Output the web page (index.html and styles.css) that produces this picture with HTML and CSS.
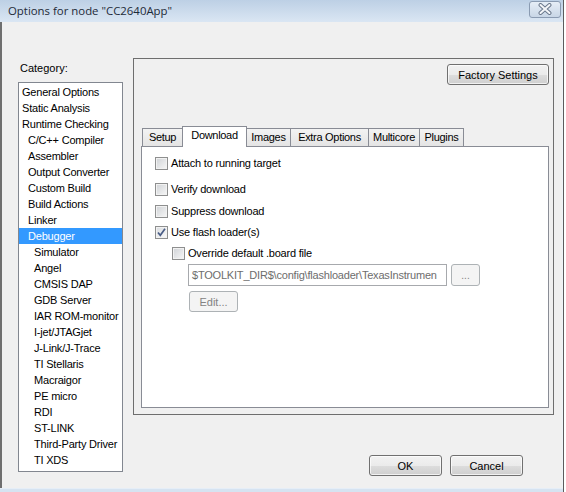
FILE: index.html
```html
<!DOCTYPE html>
<html>
<head>
<meta charset="utf-8">
<title>Options for node "CC2640App"</title>
<link rel="stylesheet" href="styles.css">
</head>
<body>
<div class="win">
  <div class="titlebar">
    <span class="title">Options for node "CC2640App"</span>
    <div class="close">
      <svg width="16" height="12" viewBox="0 0 16 12">
        <path d="M3.5 2 L12.5 10 M12.5 2 L3.5 10" stroke="#6a788c" stroke-width="4" stroke-linecap="round" fill="none"/>
        <path d="M3.5 2 L12.5 10 M12.5 2 L3.5 10" stroke="#f4f6f9" stroke-width="2" stroke-linecap="round" fill="none"/>
      </svg>
    </div>
  </div>
  <div class="client">
    <div class="main">
      <div class="left">
        <div class="cat-label">Category:</div>
        <ul class="list">
          <li class="l0">General Options</li>
          <li class="l0">Static Analysis</li>
          <li class="l0">Runtime Checking</li>
          <li class="l1">C/C++ Compiler</li>
          <li class="l1">Assembler</li>
          <li class="l1">Output Converter</li>
          <li class="l1">Custom Build</li>
          <li class="l1">Build Actions</li>
          <li class="l1">Linker</li>
          <li class="l1 sel">Debugger</li>
          <li class="l2">Simulator</li>
          <li class="l2">Angel</li>
          <li class="l2">CMSIS DAP</li>
          <li class="l2">GDB Server</li>
          <li class="l2">IAR ROM-monitor</li>
          <li class="l2">I-jet/JTAGjet</li>
          <li class="l2">J-Link/J-Trace</li>
          <li class="l2">TI Stellaris</li>
          <li class="l2">Macraigor</li>
          <li class="l2">PE micro</li>
          <li class="l2">RDI</li>
          <li class="l2">ST-LINK</li>
          <li class="l2">Third-Party Driver</li>
          <li class="l2">TI XDS</li>
        </ul>
      </div>
      <div class="right">
        <div class="panel">
          <div class="panel-top">
            <button class="btn factory">Factory Settings</button>
          </div>
          <div class="tabs">
            <div class="tab t-setup">Setup</div>
            <div class="tab t-download active">Download</div>
            <div class="tab t-images">Images</div>
            <div class="tab t-extra">Extra Options</div>
            <div class="tab t-multi">Multicore</div>
            <div class="tab t-plugins">Plugins</div>
          </div>
          <div class="page">
            <div class="cb-row r-attach"><span class="cb"></span><span class="cb-text">Attach to running target</span></div>
            <div class="cb-row r-verify"><span class="cb"></span><span class="cb-text">Verify download</span></div>
            <div class="cb-row r-suppress"><span class="cb"></span><span class="cb-text">Suppress download</span></div>
            <div class="cb-row r-flash"><span class="cb checked"><svg width="11" height="11" viewBox="0 0 11 11"><path d="M2 5.5 L4.3 8.3 L9 1.8" stroke="#4a5d86" stroke-width="1.7" fill="none"/></svg></span><span class="cb-text">Use flash loader(s)</span></div>
            <div class="cb-row r-override"><span class="cb"></span><span class="cb-text">Override default .board file</span></div>
            <div class="field-row">
              <div class="field">$TOOLKIT_DIR$\config\flashloader\TexasInstrumen</div>
              <button class="btn disabled browse">...</button>
            </div>
            <button class="btn disabled edit">Edit...</button>
          </div>
        </div>
        <div class="footer">
          <button class="btn ok">OK</button>
          <button class="btn cancel">Cancel</button>
        </div>
      </div>
    </div>
  </div>
  <div class="bottom-frame"></div>
</div>
</body>
</html>
```

FILE: styles.css
```css
html, body {
  margin: 0;
  padding: 0;
  background: #ffffff;
}

body {
  width: 566px;
  height: 492px;
  overflow: hidden;
  font-family: "Liberation Sans", Arial, sans-serif;
  font-size: 11px;
  color: #000;
}

.win {
  width: 563px;
  height: 492px;
  border-right: 1px solid #5c5c5c;
  background: #d3e1ef;
  display: flex;
  flex-direction: column;
}

.titlebar {
  height: 22px;
  flex: none;
  display: flex;
  align-items: center;
  justify-content: space-between;
  background: linear-gradient(#bdd0e5, #dae6f3);
}

.title {
  margin-left: 8px;
  font-family: "Open Sans", "Liberation Sans", sans-serif;
  font-size: 11.4px;
  color: #1e2a38;
  position: relative;
  top: -1px;
}

.close {
  width: 30px;
  height: 15px;
  margin-right: 2px;
  margin-top: -4px;
  border: 1px solid #8a9bb2;
  border-radius: 3px;
  background: linear-gradient(#e6eef7, #c8d6e6);
  display: flex;
  align-items: center;
  justify-content: center;
}

.client {
  height: 466px;
  flex: none;
  background: #f0f0f0;
  border-left: 2px solid #6f6f6f;
  border-right: 1px solid #eef3f8;
  overflow: hidden;
}

.bottom-frame {
  flex: 1;
  background: #d6e3f1;
  border-top: 1px solid #e6eef7;
}

.main {
  display: flex;
  align-items: flex-start;
  padding: 36px 0 0 16px;
}

.left {
  width: 105px;
  margin-right: 10px;
  display: flex;
  flex-direction: column;
}

.cat-label {
  margin: 3px 0 0 2px;
  height: 14px;
  line-height: 14px;
}

.list {
  list-style: none;
  margin: 7px 0 0 0;
  padding: 1px 0 0 0;
  border: 1px solid #828790;
  background: #fff;
  height: 387px;
  letter-spacing: -0.2px;
}

.list li {
  height: 16px;
  line-height: 16px;
  white-space: nowrap;
}

.list .l0 { padding-left: 3px; }
.list .l1 { padding-left: 9px; }
.list .l2 { padding-left: 15px; }

.list .sel {
  background: #3399ff;
  color: #fff;
}

.right {
  display: flex;
  flex-direction: column;
}

.panel {
  width: 408px;
  height: 344px;
  border: 1px solid #6e6e6e;
  padding: 5px 4px 6px 7px;
  display: flex;
  flex-direction: column;
}

.panel-top {
  display: flex;
  justify-content: flex-end;
}

.btn {
  font-family: "Liberation Sans", Arial, sans-serif;
  font-size: 11px;
  color: #000;
  border: 1px solid #707070;
  border-radius: 3px;
  background: linear-gradient(#f2f2f2 0%, #ebebeb 50%, #dddddd 51%, #cfcfcf 100%);
  box-shadow: inset 0 0 0 1px rgba(255,255,255,0.7);
  padding: 0;
  margin: 0;
  box-sizing: border-box;
}

.factory {
  width: 102px;
  height: 21px;
}

.tabs {
  display: flex;
  align-items: flex-end;
  height: 20px;
  margin-top: 41px;
  padding-left: 1px;
  letter-spacing: -0.3px;
}

.tab {
  box-sizing: border-box;
  height: 18px;
  line-height: 17px;
  text-align: center;
  border: 1px solid #898c95;
  border-bottom: none;
  margin-right: -1px;
  background: linear-gradient(#f3f3f3, #e4e4e4);
  white-space: nowrap;
}

.tab.active {
  height: 21px;
  margin-bottom: -1px;
  background: #fff;
  position: relative;
  z-index: 1;
  line-height: 16px;
}

.t-setup { width: 41px; }
.t-download { width: 65px; }
.t-images { width: 45px; }
.t-extra { width: 79px; }
.t-multi { width: 52px; }
.t-plugins { width: 45px; }

.page {
  box-sizing: border-box;
  width: 408px;
  height: 262px;
  border: 1px solid #898c95;
  background: #fff;
  padding: 10px 0 0 13px;
  display: flex;
  flex-direction: column;
  align-items: flex-start;
}

.cb-row {
  display: flex;
  align-items: center;
  height: 13px;
}

.r-verify { margin-top: 13px; }
.r-suppress { margin-top: 9px; }
.r-flash { margin-top: 8px; }
.r-override { margin-top: 8px; margin-left: 17px; }

.cb {
  box-sizing: border-box;
  width: 13px;
  height: 13px;
  border: 1px solid #8e8f8f;
  background: linear-gradient(135deg, #cfd2d6, #f7f7f7);
  box-shadow: inset 0 0 0 1px #f2f2f2;
  display: flex;
  align-items: center;
  justify-content: center;
  flex: none;
}

.cb.checked {
  background: linear-gradient(135deg, #d9dce0, #fafafa);
}

.cb-text {
  margin-left: 3px;
  line-height: 13px;
  white-space: nowrap;
  letter-spacing: -0.2px;
}

.field-row {
  display: flex;
  margin-top: 4px;
  margin-left: 33px;
}

.field {
  box-sizing: border-box;
  width: 259px;
  height: 22px;
  line-height: 20px;
  border: 1px solid #a7a9ad;
  background: #fff;
  color: #6d6d6d;
  padding-left: 3px;
  overflow: hidden;
  white-space: nowrap;
  letter-spacing: -0.2px;
}

.btn.disabled {
  border-color: #adb2b5;
  background: #f4f4f4;
  color: #838383;
  box-shadow: none;
}

.browse {
  width: 29px;
  height: 22px;
  margin-left: 4px;
  font-size: 10px;
}

.edit {
  width: 49px;
  height: 21px;
  margin-top: 5px;
  margin-left: 34px;
}

.footer {
  display: flex;
  justify-content: flex-end;
  gap: 8px;
  margin-top: 40px;
  padding-right: 31px;
}

.ok, .cancel {
  width: 73px;
  height: 21px;
}
```
